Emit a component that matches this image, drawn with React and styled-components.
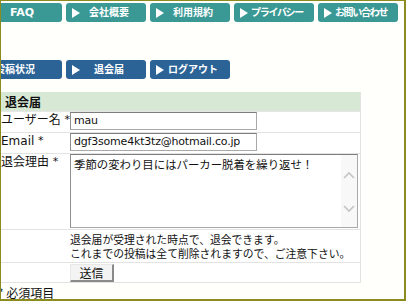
import React from 'react';
import styled, {createGlobalStyle, css} from 'styled-components';

const Global = createGlobalStyle`
    body {
        margin: 0;
        background: #fff;
    }
`
const Frame = styled.div`
    width: 406px;
    height: 301px;
    box-sizing: border-box;
    border-style: solid;
    border-color: #8b8b1f;
    border-width: 1px 2px 2px 1px;
    background: #fffffb;
    overflow: hidden;
    font-family: "DejaVu Sans", "Noto Sans CJK JP", sans-serif;
`
const Nav = styled.div`
    display: flex;
    gap: 4px;
    margin-left: -19px;
    margin-top: ${props => props.top}px;
`
const NavButton = styled.div`
    width: 80px;
    height: 19px;
    flex: none;
    box-sizing: border-box;
    border-radius: 3px;
    display: grid;
    grid-template-columns: 8px minmax(0, 1fr);
    align-items: center;
    padding: 0 ${props => props.shift || 8}px 0 6px;
    color: #fff;
    font-size: 10px;
    font-weight: bold;
    background: #3b9995;
    ${props => props.blue && css`
        background: #2c6397;
    `}
`
const Label = styled.span`
    justify-self: center;
    white-space: nowrap;
    line-height: 19px;
    ${props => props.tight && css`
        letter-spacing: -1.3px;
    `}
`
const FaqLabel = styled(Label)`
    font-size: 11px;
    margin-left: -6px;
`
function Arrow(){
    return <svg width="8" height="10" viewBox="0 0 8 10">
        <polygon points="0,0 8,5 0,10" fill="#fff"/>
    </svg>
}
function Tab({children, blue, shift, faq, tight}){
    let Text = faq ? FaqLabel : Label;
    return <NavButton blue={blue} shift={shift}>
        <Arrow/>
        <Text tight={tight}>{children}</Text>
    </NavButton>
}
const Form = styled.div`
    width: 360px;
    margin-top: 13px;
    margin-left: -1px;
    display: grid;
    grid-template-columns: 70px 1fr;
    border-right: 1px solid #e3e3e3;
    background: #fff;
    color: #111;
`
const Head = styled.div`
    grid-column: 1 / 3;
    height: 19px;
    line-height: 19px;
    padding-left: 5px;
    background: #d7e9d5;
    border-bottom: 1px solid #e6e6e6;
    font-family: "Noto Sans CJK JP", sans-serif;
    font-weight: bold;
    font-size: 12px;
`
const Cell = styled.div`
    border-bottom: 1px solid #e3e3e3;
    padding-bottom: ${props => props.pb ?? 2}px;
    font-size: 12px;
    line-height: 16px;
    ${props => props.label && css`
        padding-left: 1px;
        white-space: nowrap;
    `}
`
const Star = styled.span`
    font-size: 11px;
    vertical-align: top;
`
const Input = styled.div`
    width: 187px;
    height: 18px;
    box-sizing: border-box;
    border: 1px solid #a9a9a9;
    border-top-color: #7d7d7d;
    border-left-color: #8f8f8f;
    padding-left: 3px;
    font-size: 11px;
    letter-spacing: -0.2px;
    line-height: 16px;
    background: #fff;
`
const TextBox = styled.div`
    width: 288px;
    height: 74px;
    box-sizing: border-box;
    border: 1px solid #a9a9a9;
    border-top-color: #7d7d7d;
    border-left-color: #8f8f8f;
    display: flex;
    background: #fff;
`
const TextBody = styled.div`
    flex: 1;
    padding: 2px 3px;
    font-family: "Noto Sans CJK JP", sans-serif;
    font-size: 11.4px;
    line-height: 15px;
`
const ScrollBar = styled.div`
    width: 16px;
    background: #f8f8f8;
    display: flex;
    flex-direction: column;
    align-items: center;
    justify-content: space-between;
    padding: 16px 0 14px;
`
function Chevron({down}){
    return <svg width="12" height="8" viewBox="0 0 12 8">
        <polyline points={down ? "1,1 6,6 11,1" : "1,7 6,2 11,7"} fill="none" stroke="#c4c4c4" strokeWidth="1.6"/>
    </svg>
}
const Note = styled.div`
    font-family: "Noto Sans CJK JP", sans-serif;
    font-size: 10.8px;
    line-height: 14px;
    padding-top: 2px;
    white-space: nowrap;
`
const Submit = styled.div`
    width: 44px;
    height: 18px;
    box-sizing: border-box;
    margin-top: 1px;
    border: 1px solid #e8e8e8;
    border-right: 2px solid #8a8a8a;
    border-bottom: 2px solid #8a8a8a;
    background: #f3f3f3;
    text-align: center;
    font-family: "Noto Sans CJK JP", sans-serif;
    font-size: 12px;
    line-height: 15px;
`
const Footnote = styled.div`
    margin: 3px 0 0 -3px;
    font-family: "Noto Sans CJK JP", sans-serif;
    font-size: 12px;
    line-height: 14px;
    color: #111;
`
export default function App(){
    return <Frame>
        <Global/>
        <Nav top={2}>
            <Tab faq>FAQ</Tab>
            <Tab>会社概要</Tab>
            <Tab>利用規約</Tab>
            <Tab tight>プライバシー</Tab>
            <Tab tight>お問い合わせ</Tab>
        </Nav>
        <Nav top={38}>
            <Tab blue shift={28}>投稿状況</Tab>
            <Tab blue>退会届</Tab>
            <Tab blue>ログアウト</Tab>
        </Nav>
        <Form>
            <Head>退会届</Head>
            <Cell label>ユーザー名 <Star>*</Star></Cell>
            <Cell><Input>mau</Input></Cell>
            <Cell label>Email <Star>*</Star></Cell>
            <Cell><Input>dgf3some4kt3tz@hotmail.co.jp</Input></Cell>
            <Cell label>退会理由 <Star>*</Star></Cell>
            <Cell pb={1}>
                <TextBox>
                    <TextBody>季節の変わり目にはパーカー脱着を繰り返せ！</TextBody>
                    <ScrollBar>
                        <Chevron/>
                        <Chevron down/>
                    </ScrollBar>
                </TextBox>
            </Cell>
            <Cell/>
            <Cell>
                <Note>退会届が受理された時点で、退会できます。<br/>これまでの投稿は全て削除されますので、ご注意下さい。</Note>
            </Cell>
            <Cell/>
            <Cell pb={0}><Submit>送信</Submit></Cell>
        </Form>
        <Footnote>* 必須項目</Footnote>
    </Frame>
}
